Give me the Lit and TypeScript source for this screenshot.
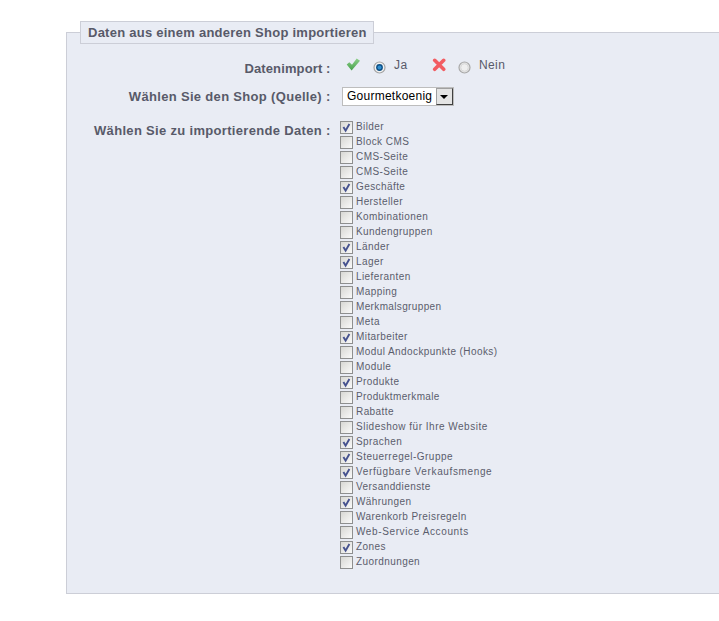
import { LitElement, html, css, svg } from "lit";
import { customElement } from "lit/decorators.js";

const ITEMS: [string, boolean, number?][] = [
  ["Bilder", true], ["Block CMS", false], ["CMS-Seite", false], ["CMS-Seite", false],
  ["Geschäfte", true], ["Hersteller", false], ["Kombinationen", false], ["Kundengruppen", false],
  ["Länder", true], ["Lager", true], ["Lieferanten", false], ["Mapping", false],
  ["Merkmalsgruppen", false, 0.36], ["Meta", false], ["Mitarbeiter", true], ["Modul Andockpunkte (Hooks)", false],
  ["Module", false], ["Produkte", true], ["Produktmerkmale", false, 0.36], ["Rabatte", false],
  ["Slideshow für Ihre Website", false, 0.5], ["Sprachen", true], ["Steuerregel-Gruppe", true, 0.48],
  ["Verfügbare Verkaufsmenge", true, 0.63], ["Versanddienste", false], ["Währungen", true],
  ["Warenkorb Preisregeln", false], ["Web-Service Accounts", false, 0.62], ["Zones", true], ["Zuordnungen", false],
];

@customElement("app-root")
export class AppRoot extends LitElement {
  static styles = css`
    :host { display: block; width: 719px; height: 621px; background: #fff; overflow: hidden;
      font-family: "Liberation Sans", Arial, sans-serif; color: #585a69; }
    .page { padding: 21px 0 0 66px; }
    fieldset { margin: 0; padding: 0 0 23px 0; min-width: 0; width: 700px; box-sizing: border-box;
      background: #e9ecf4; border: 1px solid #ccced7; }
    legend { margin-left: 13px; padding: 0 7px; height: 23px; box-sizing: border-box; width: 294px;
      border: 1px solid #ccced7; background: #e9ecf4; font-size: 13px; font-weight: 700; line-height: 21px;
      letter-spacing: 0.25px; white-space: nowrap; color: #585a69; }
    .row { display: flex; }
    .label { width: 263.6px; flex: none; text-align: right; font-size: 13px; font-weight: 700; letter-spacing: 0.32px;
      color: #585a69; white-space: nowrap; }
    .value { margin-left: 11.4px; }
    .r1 { margin-top: 14px; height: 31px; }
    .r1 .label { line-height: 21px; letter-spacing: 0.13px; }
    .r1 .value { display: flex; align-items: flex-start; font-size: 12px; letter-spacing: 0.4px; }
    .r2 { height: 31px; }
    .r2 .label { line-height: 16px; }
    .ic { display: block; flex: none; }
    .yes-ic { margin: 0 0 0 4px; }
    .x-ic { margin-left: 1px; }
    .radio { display: block; flex: none; margin: 3px 0 0 0; }
    .txt { line-height: 13px; margin-top: 1px; }
    .ja { margin-left: 8px; width: 37px; }
    .nein { margin-left: 8px; }
    .sel { display: flex; width: 112px; height: 19px; margin-top: -2px; box-sizing: border-box; border: 1px solid #bdbdbd;
      background: #fff; color: #000; font-size: 12px; line-height: 17px; padding-left: 4px; letter-spacing: 0.25px;
      overflow: hidden; }
    .sel span { flex: 1; min-width: 0; white-space: nowrap; }
    .arrow { flex: none; width: 17px; height: 17px; box-sizing: border-box; background: #e4e4e4;
      border: 1px solid; border-color: #a0a0a0 #404040 #404040 #a0a0a0; display: flex; align-items: center; justify-content: center; }
    .tri { width: 0; height: 0; border: 4px solid transparent; border-top: 4px solid #000; border-bottom: 0; }
    .r3 .label { line-height: 16px; margin-top: 3px; }
    .r3 .value { margin-left: 9.4px; }
    .list { display: flex; flex-direction: column; }
    .item { display: flex; height: 15px; align-items: flex-start; }
    .cb { display: block; flex: none; margin-top: 1px; }
    .item span { margin-left: 3px; font-size: 10px; line-height: 13px; letter-spacing: 0.42px; color: #5b5d6c; white-space: nowrap; }
  `;

  private cb(on: boolean) {
    return html`<svg class="cb" width="13" height="13" viewBox="0 0 13 13">
      <defs><linearGradient id="g" x1="0" y1="0" x2="1" y2="1"><stop offset="0" stop-color="#d6d6d2"/><stop offset="1" stop-color="#fbfbfb"/></linearGradient></defs>
      <rect x=".5" y=".5" width="12" height="12" fill="url(#g)" stroke="#8e8f8f"/>
      ${on ? svg`<path d="M3.4 6 L5.6 9.6 L9.4 3" fill="none" stroke="#46528f" stroke-width="1.9"/>` : ""}
    </svg>`;
  }

  render() {
    return html`<div class="page"><fieldset>
      <legend>Daten aus einem anderen Shop importieren</legend>
      <div class="row r1">
        <div class="label">Datenimport :</div>
        <div class="value">
          <svg class="ic yes-ic" width="15" height="14" viewBox="0 0 15 14">
            <defs><linearGradient id="gy" x1="0" y1="0" x2="0" y2="1"><stop offset="0" stop-color="#8ed08a"/><stop offset="1" stop-color="#45a04a"/></linearGradient></defs>
            <path d="M.7 6.5 L3.3 4.3 L6 6.8 L10.7.4 L14 2.8 L5.6 12.6 Z" fill="url(#gy)"/>
          </svg>
          <svg class="radio" style="margin-left:12px" width="13" height="13" viewBox="0 0 13 13">
            <circle cx="6.5" cy="6.5" r="5.5" fill="#f2f2f2" stroke="#a4a4a4" stroke-width="1.2"/><circle cx="6.5" cy="6.5" r="3.4" fill="#0c4f86"/><circle cx="6.5" cy="6.5" r="2" fill="#2f8fd0"/>
          </svg>
          <div class="txt ja">Ja</div>
          <svg class="ic x-ic" width="14" height="14" viewBox="0 0 14 14"><path d="M2.7 2.3 L11.7 11.3 M11.7 2.3 L2.7 11.3" stroke="#f25c62" stroke-width="3.6" stroke-linecap="round"/></svg>
          <svg class="radio" style="margin-left:12px" width="13" height="13" viewBox="0 0 13 13"><circle cx="6.5" cy="6.5" r="5.5" fill="#e6e6e6" stroke="#a8a8a8" stroke-width="1.2"/><circle cx="6.5" cy="6.5" r="3.8" fill="#efefef" stroke="#d8d8d8"/></svg>
          <div class="txt nein">Nein</div>
        </div>
      </div>
      <div class="row r2">
        <div class="label">Wählen Sie den Shop (Quelle) :</div>
        <div class="value"><div class="sel"><span>Gourmetkoenig</span><div class="arrow"><div class="tri"></div></div></div></div>
      </div>
      <div class="row r3">
        <div class="label">Wählen Sie zu importierende Daten :</div>
        <div class="value list">${ITEMS.map(([t, on, ls]) => html`<div class="item">${this.cb(on)}<span style=${ls ? `letter-spacing:${ls}px` : ""}>${t}</span></div>`)}</div>
      </div>
    </fieldset></div>`;
  }
}
